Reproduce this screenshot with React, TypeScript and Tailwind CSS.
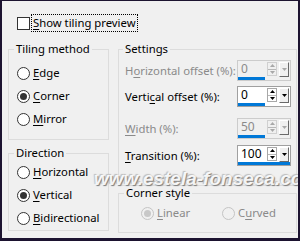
import React from 'react';

const font = "font-['Noto_Sans','DejaVu_Sans',sans-serif]";

function Mn({ text, at }: { text: string; at: number }) {
  return (
    <>
      {text.slice(0, at)}
      <span className="underline underline-offset-2">{text[at]}</span>
      {text.slice(at + 1)}
    </>
  );
}

function Radio({ label, at, checked, disabled }: { label: string; at: number; checked?: boolean; disabled?: boolean }) {
  return (
    <div className="flex items-center h-[18px] gap-[3px]">
      <div
        className={`w-[13px] h-[13px] rounded-full border flex items-center justify-center shrink-0 ${
          disabled ? 'border-[#c4c4c4] bg-[#f0f0f0]' : 'border-[#333333] bg-white'
        }`}
      >
        {checked && <div className={`w-[7px] h-[7px] rounded-full ${disabled ? 'bg-[#c8c8c8]' : 'bg-[#333333]'}`} />}
      </div>
      <span className={`whitespace-nowrap ${disabled ? 'text-[#8a8a8a]' : 'text-black'}`}>
        <Mn text={label} at={at} />
      </span>
    </div>
  );
}

function Tri({ up, color }: { up?: boolean; color: string }) {
  return (
    <svg width="5" height="3" viewBox="0 0 5 3">
      <path d={up ? 'M0 3 L2.5 0 L5 3 Z' : 'M0 0 L5 0 L2.5 3 Z'} fill={color} />
    </svg>
  );
}

function Spin({ value, bar, disabled }: { value: string; bar: number; disabled?: boolean }) {
  const ink = disabled ? '#a8a8a8' : '#000000';
  return (
    <div
      className={`w-[54px] h-[21px] shrink-0 border flex flex-col ${
        disabled ? 'border-[#cccccc] bg-[#f0f0f0]' : 'border-[#a0a0a0] bg-white'
      }`}
    >
      <div className="flex-1 flex items-center pr-[1px] gap-[2px]">
        <span className={`flex-1 pl-[3px] text-[12px] leading-none ${disabled ? 'text-[#8a8a8a]' : 'text-black'}`}>{value}</span>
        <div className={`w-[10px] h-[14px] border flex flex-col ${disabled ? 'border-[#d0d0d0]' : 'border-[#a8a8a8]'}`}>
          <div className="flex-1 flex items-center justify-center border-b border-[#b8b8b8]">
            <Tri up color={ink} />
          </div>
          <div className="flex-1 flex items-center justify-center">
            <Tri color={ink} />
          </div>
        </div>
        <div className="w-[10px] h-[15px] flex items-center justify-center bg-[#f0f0f0] border-t border-l border-white border-r border-b border-r-[#696969] border-b-[#696969]">
          <Tri color={ink} />
        </div>
      </div>
      <div className="h-[3px]">
        <div className="h-full bg-[#0078d7]" style={{ width: bar }} />
      </div>
    </div>
  );
}

function Row({ label, at, disabled, value, bar, mt }: { label: string; at: number; disabled?: boolean; value: string; bar: number; mt: string }) {
  return (
    <div className={`flex items-center justify-between ${mt}`}>
      <span className={`whitespace-nowrap ${disabled ? 'text-[#8a8a8a]' : 'text-black'}`}>
        <Mn text={label} at={at} />
      </span>
      <Spin value={value} bar={bar} disabled={disabled} />
    </div>
  );
}

export default function App() {
  return (
    <div
      className={`relative w-[300px] h-[241px] overflow-hidden bg-[#f0f0f0] border-l-2 border-t border-r-2 border-b-[3px] border-[#1c1330] text-[11.3px] text-black ${font}`}
    >
      {/* Show tiling preview */}
      <div className="flex items-center h-[18px] mt-[13px] ml-[15px] gap-[2px]">
        <div className="w-[13px] h-[13px] border border-[#333333] bg-white shrink-0" />
        <span className="px-[1px] outline-1 outline-dotted outline-black leading-[16px]">
          <Mn text="Show tiling preview" at={0} />
        </span>
      </div>

      <div className="flex mt-[10px] pl-[6px] gap-[9px] leading-[14px]">
        {/* Left column */}
        <div className="w-[101px] flex flex-col">
          <fieldset className="h-[98px] border border-[#dcdcdc]">
            <legend className="ml-[5px] px-[2px]">Tiling method</legend>
            <div className="flex flex-col pt-[8px] pl-[8px] gap-[5px]">
              <Radio label="Edge" at={0} />
              <Radio label="Corner" at={0} checked />
              <Radio label="Mirror" at={0} />
            </div>
          </fieldset>
          <fieldset className="h-[85px] mt-[6px] border border-[#dcdcdc]">
            <legend className="ml-[5px] px-[2px]">Direction</legend>
            <div className="flex flex-col pt-[3px] pl-[8px] gap-[5px]">
              <Radio label="Horizontal" at={0} />
              <Radio label="Vertical" at={0} checked />
              <Radio label="Bidirectional" at={0} />
            </div>
          </fieldset>
        </div>

        {/* Right column */}
        <div className="w-[179px] flex flex-col">
          <fieldset className="h-[144px] border border-[#dcdcdc]">
            <legend className="ml-[4px] px-[2px]">Settings</legend>
            <div className="flex flex-col pl-[6px] pr-[5px]">
              <Row label="Horizontal offset (%):" at={1} disabled value="0" bar={27} mt="mt-[4px]" />
              <Row label="Vertical offset (%):" at={5} value="0" bar={27} mt="mt-[5px]" />
              <Row label="Width (%):" at={0} disabled value="50" bar={27} mt="mt-[11px]" />
              <Row label="Transition (%):" at={0} value="100" bar={52} mt="mt-[6px]" />
            </div>
          </fieldset>
          <fieldset className="h-[47px] border border-[#dcdcdc]">
            <legend className="ml-[5px] px-[2px]">Corner style</legend>
            <div className="flex pt-[4px] pl-[22px]">
              <div className="w-[81px]">
                <Radio label="Linear" at={0} checked disabled />
              </div>
              <Radio label="Curved" at={1} disabled />
            </div>
          </fieldset>
        </div>
      </div>

      {/* watermark */}
      <div className="absolute left-[92px] top-[168px] text-[19px] leading-none font-bold italic text-white/90 font-['Liberation_Sans',sans-serif] whitespace-nowrap [text-shadow:1px_1px_1px_#7a7a7a,-1px_-1px_1px_#bdbdbd]">
        www.estela-fonseca.com
      </div>
    </div>
  );
}
